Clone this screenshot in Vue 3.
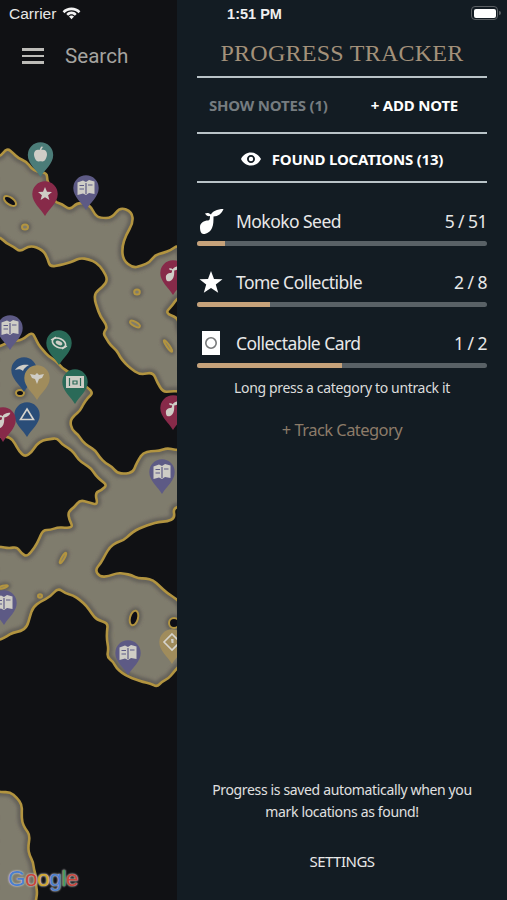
<template>
  <div class="screen">
    <div class="status-bar">
      <div class="status-left">
        <span class="carrier">Carrier</span>
        <svg class="wifi" width="19" height="14" viewBox="0 0 19 14">
          <path d="M9.500 1.500C6 1.500 3 2.800 .6 5.200L2.400 7.200C4.200 5.400 6.700 4.200 9.500 4.200S14.800 5.400 16.600 7.200L18.400 5.200C16 2.800 13 1.500 9.500 1.500Z" />
          <path d="M9.500 5.600C7.600 5.600 5.800 6.400 4.300 7.900L6.100 9.800C7 8.900 8.200 8.300 9.500 8.300S12 8.900 12.900 9.800L14.700 7.900C13.200 6.400 11.400 5.600 9.500 5.600Z" />
          <path d="M9.500 9.500C8.600 9.500 7.700 9.900 7 10.600L9.500 13.300L12 10.600C11.300 9.900 10.400 9.500 9.500 9.500Z" />
        </svg>
      </div>
      <span class="clock">1:51 PM</span>
      <div class="battery"><div class="battery-level"></div></div>
    </div>

    <div class="map-col">
      <svg class="map" width="177" height="900" viewBox="0 0 177 900">
        <defs>
          <clipPath id="land-clip">
            <path v-for="(d, i) in landPaths" :key="i" :d="d" />
          </clipPath>
          <filter id="soft" x="-5%" y="-5%" width="110%" height="110%">
            <feGaussianBlur stdDeviation="0.55" />
          </filter>
          <filter id="softer" x="-5%" y="-5%" width="110%" height="110%">
            <feGaussianBlur stdDeviation="1.800" />
          </filter>
        </defs>
        <g filter="url(#soft)">
          <path v-for="(d, i) in landPaths" :key="'f' + i" :d="d" class="land" />
          <g clip-path="url(#land-clip)">
            <g filter="url(#softer)">
              <path v-for="(d, i) in landPaths" :key="'h' + i" :d="d" class="land-halo" />
              <ellipse v-for="(h, i) in holes" :key="'oh' + i" :cx="h.x" :cy="h.y" :rx="h.rx + 3.500" :ry="h.ry + 3.500" :transform="`rotate(${h.rot} ${h.x} ${h.y})`" class="hole-halo" />
            </g>
          </g>
          <path v-for="(d, i) in landPaths" :key="'e' + i" :d="d" class="land-edge" />
          <ellipse v-for="(h, i) in holes" :key="'o' + i" :cx="h.x" :cy="h.y" :rx="h.rx" :ry="h.ry" :transform="`rotate(${h.rot} ${h.x} ${h.y})`" :class="h.dark ? 'hole-dark' : 'hole'" />
          <g v-for="(p, i) in pins" :key="'p' + i" :transform="`translate(${p.x} ${p.y})`">
            <path d="M-12.700 0A12.700 12.700 0 0 1 12.700 0C12.700 9 4.500 14 0 22C-4.500 14 -12.700 9 -12.700 0Z" :fill="p.color" />
            <g class="pin-icon">
              <path v-if="p.icon === 'map'" d="M-8.500 -5.500L-3 -7.500L0 -6L3 -8L8.500 -6.500V6L3 5L0 7L-3 5.500L-8.500 7Z" />
              <path v-if="p.icon === 'map'" d="M0 -5V6M-6.500 -2.500H-2M-6.500 1H-2M2 -3H6.500" class="pin-line" :stroke="p.color" />
              <path v-if="p.icon === 'star'" d="M0 -7L2 -2.200L7 -2L3.100 1.200L4.400 6L0 3.300L-4.400 6L-3.100 1.200L-7 -2L-2 -2.200Z" />
              <path v-if="p.icon === 'apple'" d="M-1 -5C-3 -6 -6.500 -5 -6.500 -1C-6.500 3 -4 7 -1.500 6.500C-.5 6.300 .5 6.300 1.500 6.500C4 7 6.500 3 6.500 -1C6.500 -5 3 -6 1 -5C1 -6 2 -8 3 -8L1 -8.500C0 -7.500 -.5 -6 -1 -5Z" />
              <path v-if="p.icon === 'seed'" transform="translate(-9 -9) scale(.62)" d="M3 21C3 17 7 14.500 11 14.500C12.500 14.500 13 13 13 10C11 10.500 9 9.500 8 7.500C10 6.500 12.500 7 14 8.500C15 5.500 20 3 26.500 3C25 7.500 21 10.500 16.500 10.500C16.500 15 16.500 19 15 22C13.500 25.500 10 28 6.500 28C4 28 3 25 3 21Z" />
              <g v-if="p.icon === 'swirl'">
                <ellipse cx="0" cy="0" rx="7" ry="4.500" transform="rotate(25)" class="pin-ring" />
                <ellipse cx="0" cy="0" rx="3.500" ry="2" transform="rotate(25)" />
                <path d="M-8 -3L-3 -6M8 3L3 6" class="pin-stroke" />
              </g>
              <g v-if="p.icon === 'chest'">
                <path d="M-9 -6H9V6H-9Z" />
                <path d="M-5.500 -4V4M5.500 -4V4M-2 -1H2V2H-2Z" class="pin-line" :stroke="p.color" />
              </g>
              <path v-if="p.icon === 'wing'" d="M-7 -4L-2 -3L0 -5L2 -3L7 -4L5 0L2 1L0 6L-2 1L-5 0Z" />
              <path v-if="p.icon === 'dome'" d="M-9 0C-6 -5 0 -6 5 -5C2 -3 0 -2 -1 1C-3 -1 -6 -1 -9 0Z" />
              <path v-if="p.icon === 'triangle'" d="M0 -6L6.500 4.500H-6.500Z" class="pin-tri" />
              <g v-if="p.icon === 'diamond'">
                <path d="M0 -8L8 0L0 8L-8 0Z" class="pin-tri" />
                <path d="M-1 -3H1.500V1H-.5Z" />
              </g>
            </g>
          </g>
        </g>
      </svg>
      <div class="search-bar">
        <div class="burger"><span></span><span></span><span></span></div>
        <span class="search-label">Search</span>
      </div>
      <div class="google">
        <span class="g-blue">G</span><span class="g-red">o</span><span class="g-yellow">o</span><span class="g-blue">g</span><span class="g-green">l</span><span class="g-red">e</span>
      </div>
    </div>

    <div class="panel">
      <h1 class="title">PROGRESS TRACKER</h1>
      <div class="note-actions">
        <span class="show-notes">SHOW NOTES (1)</span>
        <span class="add-note">+ ADD NOTE</span>
      </div>
      <div class="found">
        <svg width="20" height="14" viewBox="0 0 20 14">
          <path fill-rule="evenodd" fill="#fff" d="M10 .5C5.500 .5 2 3 0 7C2 11 5.500 13.500 10 13.500S18 11 20 7C18 3 14.500 .5 10 .5ZM10 3C12.300 3 14 4.800 14 7S12.300 11 10 11S6 9.200 6 7S7.700 3 10 3ZM10 4.800A2.200 2.200 0 1 0 10 9.200A2.200 2.200 0 1 0 10 4.800Z" />
        </svg>
        <span>FOUND LOCATIONS (13)</span>
      </div>

      <div class="tracker-list">
        <div v-for="row in rows" :key="row.name" class="tracker-row">
          <div class="tracker-head">
            <svg class="tracker-icon" width="28" height="30" viewBox="0 0 28 30">
              <path v-if="row.icon === 'seed'" fill="#fff" d="M3 21C3 17 7 14.500 11 14.500C12.500 14.500 13 13 13 10C11 10.500 9 9.500 8 7.500C10 6.500 12.500 7 14 8.500C15 5.500 20 3 26.500 3C25 7.500 21 10.500 16.500 10.500C16.500 15 16.500 19 15 22C13.500 25.500 10 28 6.500 28C4 28 3 25 3 21Z" />
              <path v-if="row.icon === 'star'" fill="#fff" d="M14 4L17 12L25.500 12.300L18.800 17.500L21.200 25.800L14 21L6.800 25.800L9.200 17.500L2.500 12.300L11 12Z" />
              <g v-if="row.icon === 'card'">
                <rect x="5" y="3" width="18" height="24" fill="#fff" />
                <circle cx="14" cy="15" r="5.200" fill="none" stroke="#77797a" stroke-width="1.600" />
              </g>
            </svg>
            <span class="tracker-name">{{ row.name }}</span>
            <span class="tracker-count">{{ row.found }} / {{ row.total }}</span>
          </div>
          <div class="bar">
            <div class="bar-fill" :style="{ width: (row.found / row.total) * 100 + '%' }"></div>
          </div>
        </div>
      </div>

      <p class="hint">Long press a category to untrack it</p>
      <div class="track-category">+ Track Category</div>

      <p class="saved">Progress is saved automatically when you<br />mark locations as found!</p>
      <div class="settings">SETTINGS</div>
    </div>
  </div>
</template>

<script setup>
const rows = [
  { name: 'Mokoko Seed', icon: 'seed', found: 5, total: 51 },
  { name: 'Tome Collectible', icon: 'star', found: 2, total: 8 },
  { name: 'Collectable Card', icon: 'card', found: 1, total: 2 }
]

const RED = '#87294a'
const PURPLE = '#5d5a85'
const TEAL = '#4c7b78'
const GREEN = '#2b6a58'
const BLUE = '#2c4d78'
const TAN = '#a08c5c'

const pins = [
  { x: 40.5, y: 155, color: TEAL, icon: 'apple' },
  { x: 86, y: 188, color: PURPLE, icon: 'map' },
  { x: 45, y: 194, color: RED, icon: 'star' },
  { x: 173, y: 273, color: RED, icon: 'seed' },
  { x: 10, y: 328, color: PURPLE, icon: 'map' },
  { x: 59, y: 343, color: GREEN, icon: 'swirl' },
  { x: 24, y: 370, color: BLUE, icon: 'dome' },
  { x: 37, y: 378, color: TAN, icon: 'wing' },
  { x: 75, y: 382, color: GREEN, icon: 'chest' },
  { x: 27, y: 415, color: BLUE, icon: 'triangle' },
  { x: 3, y: 420, color: RED, icon: 'seed' },
  { x: 173, y: 408, color: RED, icon: 'seed' },
  { x: 162, y: 472, color: PURPLE, icon: 'map' },
  { x: 4, y: 603, color: PURPLE, icon: 'map' },
  { x: 128, y: 653, color: PURPLE, icon: 'map' },
  { x: 172, y: 642, color: TAN, icon: 'diamond' }
]

const holes = [
  { x: 10, y: 201, rx: 7, ry: 3.500, rot: 35, dark: true },
  { x: 25, y: 227, rx: 3, ry: 2.500, rot: 0 },
  { x: 137, y: 292, rx: 2.800, ry: 2.500, rot: 0 },
  { x: 135, y: 324, rx: 5.500, ry: 2.200, rot: 30 },
  { x: 168, y: 346, rx: 7, ry: 1.400, rot: 55 },
  { x: 63, y: 558, rx: 6, ry: 1.400, rot: -60 },
  { x: 40, y: 596, rx: 2, ry: 1.800, rot: 0 },
  { x: 134, y: 618, rx: 7.500, ry: 4, rot: -75, dark: true },
  { x: 174, y: 623, rx: 5, ry: 5, rot: 0, dark: true },
  { x: 3, y: 587, rx: 5, ry: 1.300, rot: -15 },
  { x: 20, y: 393, rx: 4, ry: 3, rot: 0, dark: true }
]

// long coast segments get a small wobble so the outline isn't too clean
const roughen = (pts) => {
  const out = []
  pts.forEach((p, i) => {
    const next = pts[(i + 1) % pts.length]
    out.push(p)
    const dx = next[0] - p[0]
    const dy = next[1] - p[1]
    const len = Math.hypot(dx, dy)
    const steps = Math.floor(len / 7)
    for (let s = 1; s < steps; s++) {
      const off = Math.sin(i * 2.3 + s * 1.9) * 1.300
      out.push([p[0] + (dx * s) / steps - (dy / len) * off, p[1] + (dy * s) / steps + (dx / len) * off])
    }
  })
  return out
}

// rounded outlines through the midpoints of the hand-traced coastline
const smooth = (pts) => {
  const mid = (a, b) => [(a[0] + b[0]) / 2, (a[1] + b[1]) / 2]
  const start = mid(pts[pts.length - 1], pts[0])
  let d = `M${start[0]} ${start[1]}`
  pts.forEach((p, i) => {
    const m = mid(p, pts[(i + 1) % pts.length])
    d += `Q${p[0]} ${p[1]} ${m[0]} ${m[1]}`
  })
  return d + 'Z'
}

const landPaths = [
  [[-8, 157], [0, 157], [7, 148], [13, 153], [18, 158], [27, 162], [31, 168], [37, 172], [47, 173], [47, 180], [55, 202], [62, 204], [70, 210], [78, 202], [90, 205], [95, 215], [100, 218], [112, 218], [120, 207], [132, 212], [133, 223], [126, 235], [122, 247], [123, 260], [133, 268], [150, 262], [155, 255], [163, 253], [178, 245], [185, 270], [185, 297], [178, 297], [165, 313], [178, 318], [185, 350], [185, 392], [163, 392], [157, 382], [153, 372], [140, 375], [130, 368], [120, 357], [103, 333], [108, 327], [100, 316], [97, 307], [95, 293], [108, 280], [103, 270], [97, 263], [80, 258], [60, 265], [50, 267], [43, 250], [30, 245], [20, 252], [0, 237], [-8, 237]],
  [[-8, 347], [22, 340], [32, 332], [43, 350], [62, 368], [93, 393], [70, 421], [72, 430], [117, 473], [133, 472], [143, 453], [167, 448], [185, 450], [185, 505], [173, 508], [175, 518], [143, 527], [110, 547], [95, 570], [100, 577], [117, 573], [153, 580], [167, 593], [178, 600], [185, 620], [185, 660], [173, 673], [157, 687], [143, 682], [122, 673], [107, 657], [108, 623], [97, 620], [80, 600], [58, 588], [50, 597], [33, 607], [27, 627], [0, 640], [-8, 640], [-8, 547], [17, 547], [27, 557], [35, 547], [43, 530], [73, 527], [68, 512], [80, 500], [98, 505], [95, 493], [107, 485], [57, 438], [43, 440], [25, 457], [10, 437], [-8, 437]],
  [[-8, 790], [10, 792], [22, 805], [22, 822], [30, 835], [28, 848], [33, 862], [36, 885], [37, 910], [-8, 910]]
].map((pts) => smooth(roughen(pts)))
</script>

<style>
html,
body {
  margin: 0;
  background: #101114;
}
</style>

<style scoped>
.screen {
  position: relative;
  display: flex;
  width: 507px;
  height: 900px;
  overflow: hidden;
  font-family: "Noto Sans", sans-serif;
  color: #fff;
}

.status-bar {
  position: absolute;
  top: 0;
  left: 0;
  right: 0;
  height: 28px;
  display: grid;
  grid-template-columns: 1fr auto 1fr;
  align-items: center;
  padding: 0 7px 0 9px;
  font-family: "Liberation Sans", sans-serif;
  font-size: 14.500px;
  color: #e6e6e6;
  z-index: 2;
}

.status-left {
  display: flex;
  align-items: center;
  gap: 6px;
}

.carrier {
  font-size: 15.500px;
}

.wifi {
  fill: #f2f2f2;
  margin-top: -3px;
}

.clock {
  font-weight: 700;
  color: #f0f0f0;
}

.battery {
  position: relative;
  justify-self: end;
  width: 27px;
  height: 14px;
  border: 1.500px solid #5c6064;
  border-radius: 4px;
  box-sizing: border-box;
  padding: 1.500px;
  margin: -2px 2px 0 0;
}

.battery::after {
  content: "";
  position: absolute;
  right: -3.500px;
  top: 3.500px;
  width: 2px;
  height: 4px;
  background: #5c6064;
  border-radius: 0 2px 2px 0;
}

.battery-level {
  height: 100%;
  background: #fff;
  border-radius: 2px;
}

.map-col {
  position: relative;
  width: 177px;
  flex: none;
  background: #101114;
}

.map {
  position: absolute;
  top: 0;
  left: 0;
  display: block;
}

.land {
  fill: #7f7b6d;
}

.land-halo {
  fill: none;
  stroke: #65625a;
  stroke-width: 9;
}

.land-edge {
  fill: none;
  stroke: #b2943f;
  stroke-width: 2.600;
  stroke-linejoin: round;
}

.hole-halo {
  fill: #65625a;
}

.hole {
  fill: #7f7b6d;
  stroke: #b2943f;
  stroke-width: 2;
}

.hole-dark {
  fill: #101114;
  stroke: #b2943f;
  stroke-width: 2;
}

.pin-icon {
  fill: #cfcdc6;
}

.pin-line {
  fill: none;
  stroke-width: 1.200;
}

.pin-ring,
.pin-tri {
  fill: none;
  stroke: #d6d4cd;
  stroke-width: 1.600;
}

.pin-stroke {
  fill: none;
  stroke: #d6d4cd;
  stroke-width: 1.400;
}

.search-bar {
  position: relative;
  display: flex;
  align-items: center;
  height: 56px;
  margin-top: 28px;
  padding-left: 22px;
  gap: 21px;
}

.burger {
  display: flex;
  flex-direction: column;
  gap: 4px;
  width: 22px;
}

.burger span {
  display: block;
  height: 2.500px;
  background: #bdbcb8;
}

.search-label {
  font-family: Roboto, sans-serif;
  font-size: 20.600px;
  color: #a5a4a0;
}

.google {
  position: absolute;
  left: 8px;
  bottom: 4px;
  font-family: "Liberation Sans", sans-serif;
  font-size: 22.500px;
  line-height: 34px;
  letter-spacing: -0.400px;
  text-shadow: 0 0 2px #c8c8c8, 0 0 2px #c8c8c8;
}

.g-blue {
  color: #4a7ed0;
}

.g-red {
  color: #c8453a;
}

.g-yellow {
  color: #d4a82c;
}

.g-green {
  color: #3f9a55;
}

.panel {
  flex: 1;
  display: flex;
  flex-direction: column;
  box-sizing: border-box;
  padding: 30px 20px 0;
  background: #131c23;
}

.title {
  margin: 0;
  height: 46px;
  display: flex;
  align-items: center;
  justify-content: center;
  font-family: "Liberation Serif", serif;
  font-size: 24px;
  font-weight: 400;
  letter-spacing: 0.260px;
  color: #a3917a;
  border-bottom: 2px solid #b9c3c7;
}

.note-actions {
  height: 54px;
  display: flex;
  align-items: center;
  font-size: 15px;
  font-weight: 700;
  letter-spacing: -0.200px;
  border-bottom: 2px solid #b9c3c7;
}

.show-notes {
  margin-left: 12px;
  color: #767c80;
}

.add-note {
  margin-left: 43px;
  color: #fff;
}

.found {
  height: 49px;
  box-sizing: border-box;
  padding-top: 2px;
  display: flex;
  align-items: center;
  justify-content: center;
  gap: 11px;
  font-size: 15px;
  font-weight: 700;
  letter-spacing: -0.200px;
  border-bottom: 2px solid #b9c3c7;
}

.tracker-list {
  display: flex;
  flex-direction: column;
  gap: 20px;
  margin-top: 22px;
}

.tracker-head {
  display: flex;
  align-items: center;
  height: 31px;
  font-size: 17.500px;
  letter-spacing: -0.550px;
  color: #e8e8e8;
}

.tracker-icon {
  flex: none;
  margin-right: 11px;
}

.tracker-count {
  margin-left: auto;
}

.bar {
  height: 5px;
  margin-top: 5px;
  border-radius: 3px;
  background: #596166;
  overflow: hidden;
}

.bar-fill {
  height: 100%;
  background: #c6a27a;
}

.hint {
  margin: 10px 0 0;
  text-align: center;
  font-size: 14px;
  letter-spacing: -0.340px;
  line-height: 20px;
  color: #dcdcdc;
}

.track-category {
  margin-top: 20px;
  text-align: center;
  font-size: 16.500px;
  letter-spacing: -0.550px;
  line-height: 24px;
  color: #8c7b69;
}

.saved {
  margin: auto 0 0;
  text-align: center;
  font-size: 14px;
  letter-spacing: -0.350px;
  line-height: 22px;
  color: #e0e0e0;
}

.settings {
  margin: 27px 0 28px;
  text-align: center;
  font-size: 15px;
  letter-spacing: -0.500px;
  line-height: 22px;
  color: #e8e8e8;
}
</style>
